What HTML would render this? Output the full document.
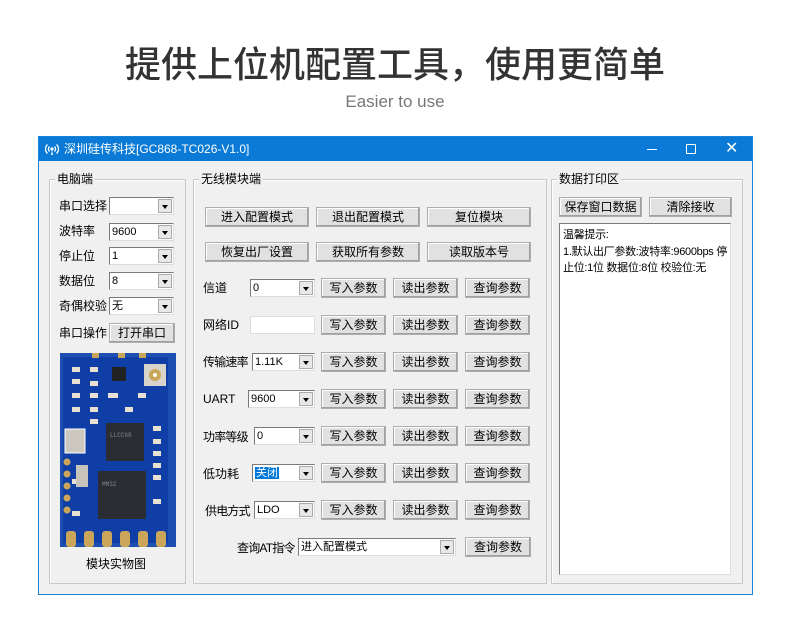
<!DOCTYPE html>
<html><head><meta charset="utf-8"><style>
*{margin:0;padding:0;box-sizing:border-box}
body{width:790px;height:642px;background:#fff;position:relative;overflow:hidden;font-family:"Liberation Sans","Noto Sans CJK SC",sans-serif;font-size:12px;color:#000;line-height:14px}
.a{position:absolute}
.h1{left:0;width:790px;top:40px;text-align:center;font-size:36px;line-height:50px;color:#333;font-weight:500}
.h2{left:0;width:790px;top:92px;text-align:center;font-size:17px;line-height:20px;color:#777}
.win{left:38px;top:136px;width:715px;height:459px;background:#f0f0f0;border:1px solid #1883d7}
.tb{left:0;top:0;width:713px;height:24px;background:#0a7ad6;color:#fff}
.grp{border:1px solid #c8c8c8;box-shadow:inset 1px 1px 0 #fff}
.gt{background:#f0f0f0;padding:0 2px;font-size:12px;line-height:14px}
.btn{background:#e1e1e1;border:1px solid #adadad;text-align:center;line-height:18px;height:20px;font-size:12px;box-shadow:inset -1px -1px 0 #a0a0a0, inset 1px 1px 0 #fff}
.cb{background:#fff;border:1px solid #7a7a7a;border-right-color:#ddd;border-bottom-color:#ddd;height:18px;font-size:11px;line-height:16px;padding-left:2px}
.cb i{position:absolute;right:1px;top:1px;width:14px;height:14px;background:#e8e8e8;border:1px solid #aaa;font-style:normal}
.cb i:after{content:"";position:absolute;left:3px;top:5px;border:3px solid transparent;border-top:4px solid #000;border-bottom:0}
.lb{font-size:12px;line-height:14px}
.n{letter-spacing:-0.8px}
</style></head><body>
<div class="a h1">提供上位机配置工具，使用更简单</div>
<div class="a h2">Easier to use</div>
<div class="a win">
<div class="a tb">
<svg class="a" style="left:6px;top:6px" width="14" height="12" viewBox="0 0 14 12"><circle cx="7" cy="6" r="1.6" fill="#fff"/><path d="M4.5 3.5a3.5 3.5 0 0 0 0 5M9.5 3.5a3.5 3.5 0 0 1 0 5M2.5 1.5a6 6 0 0 0 0 9M11.5 1.5a6 6 0 0 1 0 9" stroke="#fff" stroke-width="1.3" fill="none"/><path d="M7 7L6 12h2z" fill="#fff"/></svg>
<div class="a" style="left:25px;top:5px;font-size:12px">深圳硅传科技[GC868-TC026-V1.0]</div>
<div class="a" style="left:608px;top:12px;width:10px;height:1px;background:#fff"></div>
<div class="a" style="left:647px;top:7px;width:10px;height:10px;border:1px solid #fff"></div>
<div class="a" style="left:686px;top:4px;font-size:16px;line-height:16px">✕</div>
</div>
<!-- left group -->
<div class="a grp" style="left:10px;top:42px;width:137px;height:405px"></div>
<div class="a gt" style="left:16px;top:35px">电脑端</div>
<div class="a lb" style="left:20px;top:62px">串口选择</div><div class="a cb" style="left:70px;top:60px;width:65px"><i></i></div>
<div class="a lb" style="left:20px;top:87px">波特率</div><div class="a cb" style="left:70px;top:86px;width:65px">9600<i></i></div>
<div class="a lb" style="left:20px;top:112px">停止位</div><div class="a cb" style="left:70px;top:110px;width:65px">1<i></i></div>
<div class="a lb" style="left:20px;top:137px">数据位</div><div class="a cb" style="left:70px;top:135px;width:65px">8<i></i></div>
<div class="a lb" style="left:20px;top:162px">奇偶校验</div><div class="a cb" style="left:70px;top:160px;width:65px">无<i></i></div>
<div class="a lb" style="left:20px;top:189px">串口操作</div><div class="a btn" style="left:70px;top:186px;width:66px">打开串口</div>
<svg class="a" style="left:21px;top:216px" width="116" height="194" viewBox="0 0 116 194">
<rect width="116" height="194" fill="#1c4fb0"/>
<rect x="3" y="4" width="105" height="186" fill="#0f3fa6"/>
<g fill="#c9a659"><rect x="32" y="0" width="7" height="5"/><rect x="58" y="0" width="7" height="5"/><rect x="79" y="0" width="7" height="5"/></g>
<g fill="#e8e0d0"><rect x="12" y="14" width="8" height="5"/><rect x="30" y="14" width="8" height="5"/><rect x="12" y="26" width="8" height="5"/><rect x="30" y="28" width="8" height="5"/><rect x="12" y="40" width="8" height="5"/><rect x="30" y="40" width="8" height="5"/><rect x="12" y="54" width="8" height="5"/><rect x="30" y="54" width="8" height="5"/><rect x="48" y="40" width="10" height="5"/><rect x="65" y="54" width="8" height="5"/><rect x="78" y="40" width="8" height="5"/><rect x="30" y="66" width="8" height="5"/><rect x="93" y="73" width="8" height="5"/><rect x="93" y="86" width="8" height="5"/><rect x="93" y="98" width="8" height="5"/><rect x="93" y="110" width="8" height="5"/><rect x="93" y="122" width="8" height="5"/><rect x="93" y="146" width="8" height="5"/><rect x="12" y="126" width="8" height="5"/><rect x="12" y="158" width="8" height="5"/></g>
<rect x="52" y="14" width="14" height="14" fill="#222"/>
<rect x="84" y="11" width="22" height="22" fill="#d8d4cc"/><circle cx="95" cy="22" r="6" fill="#c9a659"/><circle cx="95" cy="22" r="2" fill="#fff"/>
<rect x="5" y="76" width="20" height="24" fill="#ccc8c0" stroke="#fff"/>
<rect x="46" y="70" width="38" height="38" fill="#2a2d33"/>
<rect x="38" y="118" width="48" height="48" fill="#2a2d33"/>
<text x="50" y="84" font-size="6" fill="#888" font-family="Liberation Mono">LLCC68</text>
<text x="42" y="133" font-size="6" fill="#888" font-family="Liberation Mono">MM32</text>
<g fill="#c9a659"><circle cx="7" cy="109" r="3.5"/><circle cx="7" cy="121" r="3.5"/><circle cx="7" cy="133" r="3.5"/><circle cx="7" cy="145" r="3.5"/><circle cx="7" cy="157" r="3.5"/>
<rect x="6" y="178" width="10" height="16" rx="3"/><rect x="24" y="178" width="10" height="16" rx="3"/><rect x="42" y="178" width="10" height="16" rx="3"/><rect x="60" y="178" width="10" height="16" rx="3"/><rect x="78" y="178" width="10" height="16" rx="3"/><rect x="96" y="178" width="10" height="16" rx="3"/></g>
<rect x="16" y="112" width="12" height="22" fill="#c8c4bc"/>
</svg>
<div class="a lb" style="left:47px;top:420px">模块实物图</div>
<!-- middle group -->
<div class="a grp" style="left:154px;top:42px;width:354px;height:405px"></div>
<div class="a gt" style="left:160px;top:35px">无线模块端</div>
<div class="a btn" style="left:166px;top:70px;width:104px">进入配置模式</div>
<div class="a btn" style="left:277px;top:70px;width:104px">退出配置模式</div>
<div class="a btn" style="left:388px;top:70px;width:104px">复位模块</div>
<div class="a btn" style="left:166px;top:105px;width:104px">恢复出厂设置</div>
<div class="a btn" style="left:277px;top:105px;width:104px">获取所有参数</div>
<div class="a btn" style="left:388px;top:105px;width:104px">读取版本号</div>

<div class="a lb" style="left:164px;top:144px">信道</div><div class="a cb" style="left:211px;top:142px;width:65px">0<i></i></div>
<div class="a lb" style="left:164px;top:181px">网络ID</div><div class="a cb" style="left:211px;top:179px;width:65px;border-color:#ddd"></div>
<div class="a lb n" style="left:164px;top:218px">传输速率</div><div class="a cb" style="left:213px;top:216px;width:63px">1.11K<i></i></div>
<div class="a lb" style="left:164px;top:255px">UART</div><div class="a cb" style="left:209px;top:253px;width:67px">9600<i></i></div>
<div class="a lb n" style="left:164px;top:293px">功率等级</div><div class="a cb" style="left:215px;top:290px;width:61px">0<i></i></div>
<div class="a lb" style="left:164px;top:330px">低功耗</div><div class="a cb" style="left:213px;top:327px;width:63px"><span style="background:#0078d7;color:#fff;padding:0 1px">关闭</span><i></i></div>
<div class="a lb n" style="left:166px;top:367px">供电方式</div><div class="a cb" style="left:215px;top:364px;width:61px">LDO<i></i></div>
<div class="a lb n" style="left:198px;top:404px">查询AT指令</div><div class="a cb" style="left:259px;top:401px;width:158px">进入配置模式<i></i></div>
<div class="a btn" style="left:426px;top:400px;width:66px">查询参数</div>
<!-- right group -->
<div class="a grp" style="left:512px;top:42px;width:192px;height:405px"></div>
<div class="a gt" style="left:518px;top:35px">数据打印区</div>
<div class="a btn" style="left:520px;top:60px;width:83px">保存窗口数据</div>
<div class="a btn" style="left:610px;top:60px;width:83px">清除接收</div>
<div class="a" style="left:520px;top:86px;width:172px;height:352px;background:#fff;border:1px solid #7a7a7a;border-right-color:#ddd;border-bottom-color:#ddd;padding:3px 2px 3px 3px;font-size:11px;line-height:16.5px;letter-spacing:-0.3px">温馨提示:<br>1.默认出厂参数:波特率:9600bps 停止位:1位 数据位:8位 校验位:无</div>
</div>
<script>
var r=document.querySelector('.win'),ys=[141,178,215,252,289,326,363];
ys.forEach(function(y){[[282,'写入参数'],[354,'读出参数'],[426,'查询参数']].forEach(function(b){var d=document.createElement('div');d.className='a btn';d.style.cssText='left:'+b[0]+'px;top:'+y+'px;width:65px';d.textContent=b[1];r.appendChild(d);});});
</script>
</body></html>
